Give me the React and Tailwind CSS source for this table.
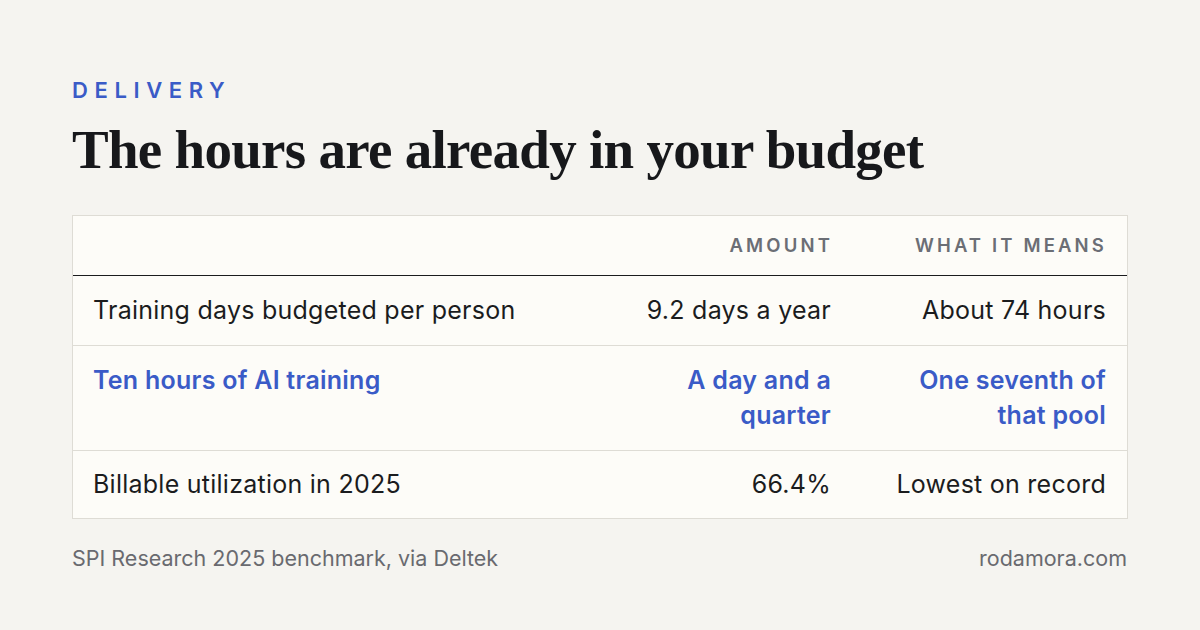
import React from "react";

const rows = [
  { label: "Training days budgeted per person", amount: "9.2 days a year", means: "About 74 hours" },
  { label: "Ten hours of AI training", amount: "A day and a quarter", means: "One seventh of that pool", highlight: true },
  { label: "Billable utilization in 2025", amount: "66.4%", means: "Lowest on record" },
];

export default function App() {
  return (
    <div className="w-[1200px] h-[630px] bg-[#f5f4f0] px-[72px] pt-[76px] font-['Inter',sans-serif] text-[#1b1c1e]">
      <div className="text-[22px] leading-[28px] font-semibold tracking-[0.3em] text-[#3a5bc7]">DELIVERY</div>
      <h1 className="mt-[16px] font-['Liberation_Serif',serif] font-bold text-[55px] leading-[60px] tracking-[-0.013em] text-[#17181b]">
        The hours are already in your budget
      </h1>

      <div className="mt-[35px] border border-[#dedcd5] bg-[#fdfcf8]">
        <div className="grid grid-cols-[1fr_260px_272px] h-[60px] items-center border-b border-[#1b1c1e] text-[18.5px] font-semibold tracking-[0.17em] text-[#6b6e75]">
          <div />
          <div className="text-right pr-[22px]">AMOUNT</div>
          <div className="text-right pr-[20px]">WHAT IT MEANS</div>
        </div>
        {rows.map((r, i) => {
          const last = i === rows.length - 1;
          return (
            <div
              key={i}
              className={
                "grid grid-cols-[1fr_260px_272px] text-[25px] leading-[35px] tracking-[0.01em] " +
                (last ? "pt-[16px] pb-[16px] " : "py-[17px] border-b border-[#dedcd5] ") +
                (r.highlight ? "font-semibold text-[#3a5bc7]" : "text-[#1b1c1e]")
              }
            >
              <div className="pl-[20px]">{r.label}</div>
              <div className="text-right pr-[24px] pl-[36px]">{r.amount}</div>
              <div className="text-right pr-[21px] pl-[30px]">{r.means}</div>
            </div>
          );
        })}
      </div>

      <div className="mt-[25px] flex justify-between text-[21.5px] leading-[28px] text-[#696a6f]">
        <span>SPI Research 2025 benchmark, via Deltek</span>
        <span className="pr-[1px]">rodamora.com</span>
      </div>
    </div>
  );
}
